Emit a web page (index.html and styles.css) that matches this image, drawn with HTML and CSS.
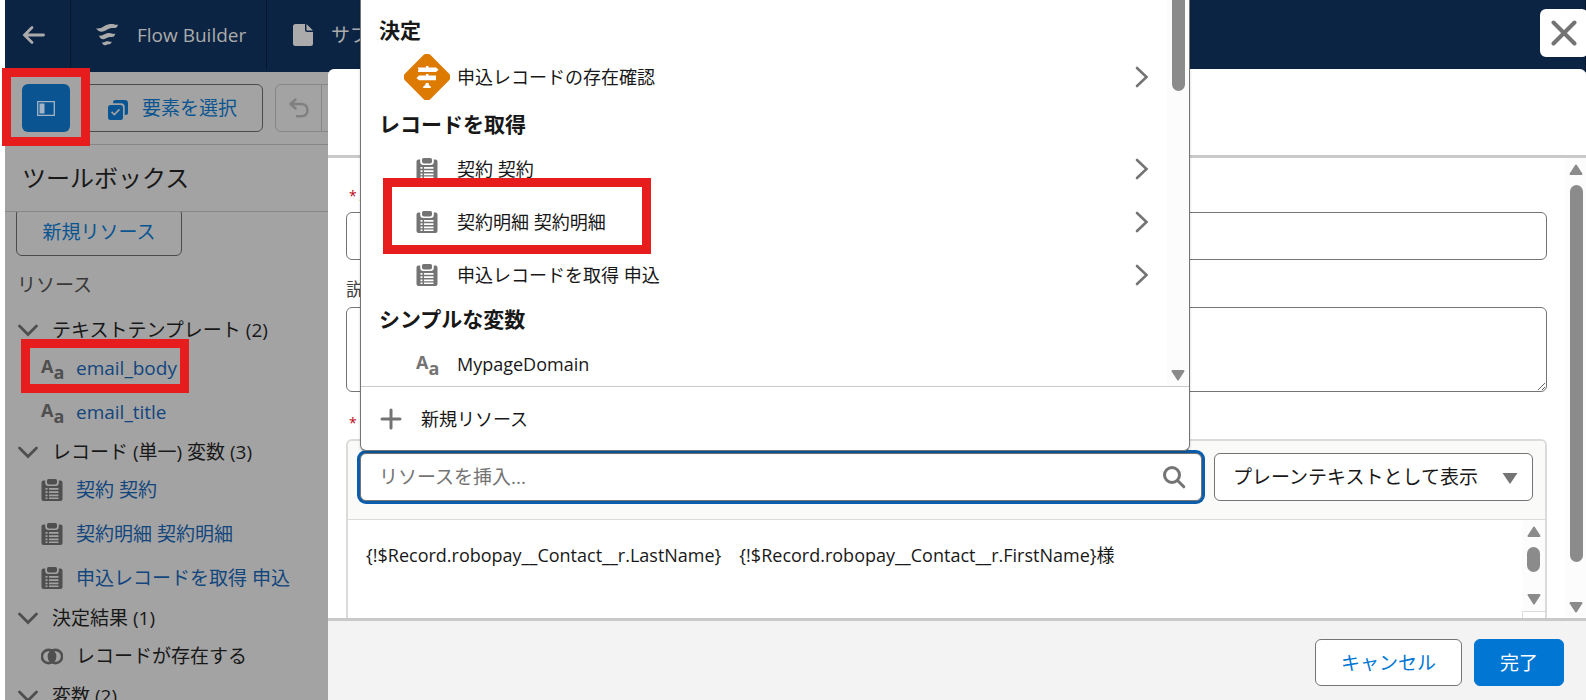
FILE: index.html
```html
<!DOCTYPE html>
<html lang="ja">
<head>
  <meta charset="UTF-8" />
  <title>Flow Builder</title>
  <meta name="viewport" content="width=device-width, initial-scale=1.0">
  <link rel="stylesheet" href="styles.css">
</head>
<body>
  <!-- shared icons -->
  <svg class="defs" aria-hidden="true">
    <symbol id="clipboard" viewBox="0 0 22 22">
      <path fill="currentColor" d="M7.500 0h7q1.500 0 1.500 1.500v2q0 2-2 2H8q-2 0-2-2v-2Q6 0 7.500 0z"/>
      <path fill="currentColor" fill-rule="evenodd" d="M2.500 1.500h1.700v2.200q0 3.300 3.300 3.300h7q3.300 0 3.300-3.300V1.500h1.700q2 0 2 2V20q0 2-2 2h-17q-2 0-2-2V3.500q0-2 2-2zM4.500 9v1.700h2V9zM8 9v1.700h9.500V9zM4.500 12.300V14h2v-1.700zM8 12.300V14h9.500v-1.700zM4.500 15.600v1.700h2v-1.700zM8 15.600v1.700h9.500v-1.700zM4.500 18.600V20h2v-1.400zM8 18.600V20h9.500v-1.400z"/>
    </symbol>
    <symbol id="right" viewBox="0 0 14 22">
      <path fill="none" stroke="currentColor" stroke-width="2.600" stroke-linecap="round" d="M2 2l9.500 9L2 20"/>
    </symbol>
    <symbol id="down" viewBox="0 0 22 14">
      <path fill="none" stroke="currentColor" stroke-width="2.800" stroke-linecap="round" d="M2.500 3L11 11.500 19.500 3"/>
    </symbol>
    <symbol id="tri-up" viewBox="0 0 14 12">
      <path fill="currentColor" stroke="currentColor" stroke-width="2" stroke-linejoin="round" d="M7 1.500L12.500 10h-11z"/>
    </symbol>
    <symbol id="tri-down" viewBox="0 0 14 12">
      <path fill="currentColor" stroke="currentColor" stroke-width="2" stroke-linejoin="round" d="M7 10.500L12.500 2h-11z"/>
    </symbol>
  </svg>

  <div class="app">
    <header class="topbar">
      <a class="back" href="#" aria-label="戻る">
        <svg width="24" height="20" viewBox="0 0 24 20" fill="none" stroke="currentColor" stroke-width="2.800" stroke-linecap="round"><path d="M3 10h18.500M10 2.500L2.500 10l7.500 7.500"/></svg>
      </a>
      <div class="brand">
        <svg width="22" height="22" viewBox="0 0 22 22" fill="currentColor"><path d="M0 4.200c3 .8 5-.2 8-2C12.500-.3 16-.5 18.500.4c1.200.5 2.500.4 3.500 0C21.500 3 20.200 4 18 4c-2.500-.2-4.500.2-7.500 2C6 8.600 2.500 8.200 0 4.200zM2.800 11.500c2 .6 3.600 0 5.700-1.200 3-1.600 5.500-1.600 7.300-.8 1.300.5 2.500.5 3.500 0-.5 2.500-1.800 3.700-4 3.500-2-.1-3.200.2-5.200 1.300-3.400 1.800-6 .6-7.300-2.800zM6 18.300c1.200.4 2.200 0 3.300-.6 1.500-.7 2.700-.6 3.700-.2.900.3 1.800.3 2.700 0-.4 2-1.400 2.900-3 2.700-1-.1-1.500.1-2.500.7-2 1-3.500.2-4.200-2.600z"/></svg>
        <span>Flow Builder</span>
      </div>
      <div class="flow-name">
        <svg width="20" height="22" viewBox="0 0 20 22" fill="currentColor"><path d="M2.500 0H12v6q0 2 2 2h6v11.500q0 2.500-2.500 2.500h-15Q0 22 0 19.500v-17Q0 0 2.500 0zM13.500 0L20 6.500h-6.500z"/></svg>
        <span>サブ</span>
      </div>
    </header>

    <div class="toolbar">
      <button class="toggle" aria-label="ツールボックスを切り替え">
        <svg width="18" height="15" viewBox="0 0 18 15"><path fill="none" stroke="currentColor" stroke-width="1.300" d="M.7.700h16.600v13.600H.7z"/><path fill="currentColor" d="M2.500 2.500h5v10h-5z"/></svg>
        <span class="mark mark-toggle"></span>
      </button>
      <button class="select-elements">
        <svg width="20" height="20" viewBox="0 0 20 20" fill="currentColor"><path fill-rule="evenodd" d="M2.500 5h10Q15 5 15 7.500v10q0 2.500-2.500 2.500h-10Q0 20 0 17.500v-10Q0 5 2.500 5zM3 12.500l3.300 3.300L12 10l-1.200-1.200-4.500 4.600-2.100-2.100z"/><path d="M5 3.300V2.500Q5 0 7.500 0h9.300Q20 0 20 3v9.500q0 2.500-2.500 2.500h-.8V7q0-3.700-3.700-3.700z"/></svg>
        要素を選択
      </button>
      <div class="history">
        <button aria-label="元に戻す">
          <svg width="20" height="20" viewBox="0 0 20 20" fill="none" stroke="currentColor" stroke-width="2.400" stroke-linecap="round" stroke-linejoin="round"><path d="M6.500 1.500L1.500 6l5 4.500M2 6h10.500q6 .5 6 6.300 0 6-6.500 6H8"/></svg>
        </button>
        <button aria-label="やり直し"></button>
      </div>
    </div>

    <aside class="toolbox">
      <h2>ツールボックス</h2>
      <div class="toolbox-body">
        <button class="new-resource">新規リソース</button>
        <h3>リソース</h3>
        <ul class="tree">
          <li class="group"><svg class="chev"><use href="#down"/></svg>テキストテンプレート (2)</li>
          <li class="leaf"><span class="aa">A<sub>a</sub></span><a href="#">email_body</a><span class="mark mark-leaf"></span></li>
          <li class="leaf"><span class="aa">A<sub>a</sub></span><a href="#">email_title</a></li>
          <li class="group"><svg class="chev"><use href="#down"/></svg>レコード (単一) 変数 (3)</li>
          <li class="leaf"><svg class="icon"><use href="#clipboard"/></svg><a href="#">契約 契約</a></li>
          <li class="leaf"><svg class="icon"><use href="#clipboard"/></svg><a href="#">契約明細 契約明細</a></li>
          <li class="leaf"><svg class="icon"><use href="#clipboard"/></svg><a href="#">申込レコードを取得 申込</a></li>
          <li class="group"><svg class="chev"><use href="#down"/></svg>決定結果 (1)</li>
          <li class="leaf"><svg class="icon" viewBox="0 0 22 22"><g fill="none" stroke="currentColor" stroke-width="2.600"><circle cx="7.500" cy="11.500" r="6.600"/><circle cx="14.500" cy="11.500" r="6.600"/></g><path fill="currentColor" d="M11 5.500q4.500 6 0 12-4.500-6 0-12z"/></svg>レコードが存在する</li>
          <li class="group"><svg class="chev"><use href="#down"/></svg>変数 (2)</li>
        </ul>
      </div>
    </aside>
  </div>

  <button class="close" aria-label="閉じる">
    <svg width="26" height="26" viewBox="0 0 26 26" fill="none" stroke="currentColor" stroke-width="4" stroke-linecap="round"><path d="M2.500 2.500l21 21M23.500 2.500l-21 21"/></svg>
  </button>

  <section class="modal" role="dialog">
    <div class="modal-header"></div>

    <div class="modal-body">
      <div class="form">
        <div class="field">
          <label for="apiName"><abbr>*</abbr>API 参照名</label>
          <input id="apiName" type="text">
        </div>
        <div class="field">
          <label for="description">説明</label>
          <textarea id="description"></textarea>
        </div>
        <div class="field">
          <label for="bodyText"><abbr>*</abbr>本文</label>
          <div class="editor">
            <div class="editor-bar">
              <div class="search">
                <input type="text" placeholder="リソースを挿入..." aria-label="リソースを挿入">
                <svg width="24" height="24" viewBox="0 0 24 24" fill="none" stroke="currentColor" stroke-width="3" stroke-linecap="round"><circle cx="10" cy="10" r="7.500"/><path d="M15.800 15.800l6 6"/></svg>
              </div>
              <div class="view-as">
                <select aria-label="表示形式"><option>プレーンテキストとして表示</option></select>
                <svg width="16" height="11" viewBox="0 0 16 11" fill="currentColor"><path d="M.5 0h15L8 11z"/></svg>
              </div>
            </div>
            <div class="editor-text">
              <textarea id="bodyText">{!$Record.robopay__Contact__r.LastName}　{!$Record.robopay__Contact__r.FirstName}様</textarea>
              <div class="side">
                <div class="scroll scroll-editor">
                  <svg><use href="#tri-up"/></svg>
                  <i></i>
                  <svg><use href="#tri-down"/></svg>
                </div>
              </div>
            </div>
          </div>
        </div>
      </div>
      <div class="scroll scroll-body">
        <svg><use href="#tri-up"/></svg>
        <i></i>
        <svg><use href="#tri-down"/></svg>
      </div>
    </div>

    <footer class="modal-footer">
      <button class="cancel">キャンセル</button>
      <button class="done">完了</button>
    </footer>

    <!-- resource picker -->
    <div class="menu">
      <div class="menu-list">
        <div class="menu-items">
          <h4>決定</h4>
          <ul>
            <li class="decision">
              <span class="pic"><svg width="46" height="46" viewBox="0 0 46 46"><rect x="5" y="5" width="36" height="36" rx="5" fill="#dd7a01" transform="rotate(45 23 23)"/><path fill="#fff" d="M14 13.500h8V12h2.500v1.500H32l2.500 2.300-2.500 2.200H14v-1.500l1-.7-1-.8zM15 21.500h7V20h2.500v1.500H32v4.700H15L12.500 24zM22 29h2.500l.5 2.200q2 .8 2 2.800h-8q0-2 2-2.800z"/></svg></span>
              申込レコードの存在確認<svg class="go"><use href="#right"/></svg>
            </li>
          </ul>
          <h4>レコードを取得</h4>
          <ul>
            <li><span class="pic"><svg class="icon"><use href="#clipboard"/></svg></span>契約 契約<svg class="go"><use href="#right"/></svg></li>
            <li><span class="pic"><svg class="icon"><use href="#clipboard"/></svg></span>契約明細 契約明細<svg class="go"><use href="#right"/></svg><span class="mark mark-item"></span></li>
            <li><span class="pic"><svg class="icon"><use href="#clipboard"/></svg></span>申込レコードを取得 申込<svg class="go"><use href="#right"/></svg></li>
          </ul>
          <h4>シンプルな変数</h4>
          <ul>
            <li><span class="pic"><span class="aa">A<sub>a</sub></span></span>MypageDomain</li>
          </ul>
        </div>
        <div class="scroll scroll-menu">
          <i></i>
          <svg><use href="#tri-down"/></svg>
        </div>
      </div>
      <button class="menu-new">
        <svg width="22" height="22" viewBox="0 0 22 22" stroke="currentColor" stroke-width="3" stroke-linecap="round"><path d="M11 2v18M2 11h18"/></svg>
        新規リソース
      </button>
    </div>
  </section>
</body>
</html>
```
FILE: styles.css
```css
* {
  box-sizing: border-box;
}

body {
  margin: 0;
  height: 100vh;
  overflow: hidden;
  position: relative;
  background: #fff;
  color: #181818;
  font-family: "Open Sans", "Noto Sans CJK JP", sans-serif;
  font-size: 19px;
  line-height: 24px;
}

button, input, select, textarea {
  font: inherit;
  color: inherit;
}

button {
  padding: 0;
  border: 1px solid #747474;
  border-radius: 6px;
  background: none;
}

a {
  color: inherit;
  text-decoration: none;
}

h2, h3, h4, ul {
  margin: 0;
  padding: 0;
  font-weight: normal;
  list-style: none;
}

.defs {
  position: absolute;
  width: 0;
  height: 0;
}

.icon {
  width: 22px;
  height: 22px;
}

/* red highlight frames */
.mark {
  position: absolute;
  border: 9px solid #e71d1d;
  z-index: 2;
}

/* dimmed page behind the modal */
.app {
  height: 100%;
  margin-left: 5px;
  display: flex;
  flex-direction: column;
  background: #a3a3a3;
}

.topbar {
  flex: none;
  display: flex;
  height: 72px;
  padding-bottom: 2px;
  background: #0c2443;
  color: #ababab;
}

.topbar > * {
  display: flex;
  align-items: center;
  border-right: 1px solid #06162b;
}

.back {
  width: 66px;
  padding-left: 17px;
}

.brand {
  width: 196px;
  padding-left: 25px;
  gap: 19px;
}

.flow-name {
  flex: 1;
  padding-left: 26px;
  gap: 18px;
}

.toolbar {
  flex: none;
  display: flex;
  gap: 12px;
  height: 73px;
  padding: 12px 17px;
  border-bottom: 1px solid #868686;
}

.toolbar button {
  height: 48px;
}

.toolbar .toggle {
  position: relative;
  width: 48px;
  border: none;
  background: #0a5591;
  color: #a3b4c4;
}

.toggle svg {
  display: block;
  margin: auto;
}

.mark-toggle {
  left: -20px;
  top: -16px;
  width: 88px;
  height: 78px;
}

.select-elements {
  width: 181px;
  display: flex;
  align-items: center;
  justify-content: flex-end;
  gap: 14px;
  padding-right: 25px;
  border-color: #4b4b4b;
  color: #0a5591;
}

.select-elements svg {
  margin-top: 4px;
}

.history {
  display: flex;
}

.history button {
  width: 47px;
  border-color: #868686;
  border-radius: 6px 0 0 6px;
  color: #808080;
}

.history button + button {
  border-left: none;
  border-radius: 0 6px 6px 0;
}

.history svg {
  display: block;
  margin: auto;
}

.toolbox {
  flex: 1;
  min-height: 0;
  width: 323px;
  display: flex;
  flex-direction: column;
}

.toolbox h2 {
  flex: none;
  height: 67px;
  padding: 0 17px;
  border-bottom: 1px solid #868686;
  font-size: 24px;
  line-height: 66px;
}

.toolbox-body {
  flex: 1;
  overflow: hidden;
  padding: 0 12px;
}

.new-resource {
  display: block;
  width: 166px;
  height: 48px;
  margin: -4px 0 0 -1px;
  border-color: #4b4b4b;
  color: #0a5591;
}

.toolbox h3 {
  margin: 17px 0 16px;
  font-size: 19px;
  color: #383838;
}

.group {
  display: flex;
  align-items: center;
  gap: 13px;
  height: 34px;
}

.chev {
  width: 22px;
  height: 14px;
  color: #4f4f4f;
}

.leaf {
  position: relative;
  display: flex;
  align-items: center;
  gap: 13px;
  height: 44px;
  padding: 0 0 2px 24px;
}

.leaf svg, .leaf .aa {
  color: #4f4f4f;
}

.leaf a {
  color: #12467d;
}

.mark-leaf {
  left: 4px;
  top: -8px;
  width: 168px;
  height: 54px;
}

.aa {
  width: 22px;
  height: 22px;
  display: flex;
  font-size: 18px;
  font-weight: bold;
  line-height: 18px;
  color: #747474;
}

.aa sub {
  font-size: 18px;
  line-height: 30px;
  vertical-align: baseline;
}

/* modal */
.close {
  position: absolute;
  top: 9px;
  right: -2px;
  width: 48px;
  height: 48px;
  border: none;
  background: #fff;
  color: #747474;
}

.close svg {
  display: block;
  margin: auto;
}

.modal {
  position: absolute;
  top: 69px;
  right: 0;
  bottom: 0;
  left: 328px;
  display: flex;
  flex-direction: column;
  background: #fff;
  border-radius: 6px 6px 0 0;
}

.modal-header {
  flex: none;
  height: 89px;
  border-bottom: 3px solid #c9c9c9;
}

.modal-body {
  flex: 1;
  min-height: 0;
  display: flex;
  overflow: hidden;
}

.form {
  flex: 1;
  padding: 26px 19px 0 18px;
}

.field {
  margin-bottom: 19px;
}

.field label {
  display: block;
  height: 24px;
  margin-bottom: 4px;
  font-size: 18px;
  line-height: 20px;
  color: #444;
}

.field abbr {
  margin: 0 3px;
  font-size: 14px;
  color: #ba0517;
}

.field > input, .field > textarea {
  display: block;
  width: 100%;
  height: 48px;
  border: 1px solid #747474;
  border-radius: 6px;
  background: #fff;
}

.field > textarea {
  height: 85px;
}

.editor {
  border: 2px solid #dddbda;
  border-radius: 6px;
}

.editor-bar {
  display: flex;
  gap: 12px;
  padding: 12px 12px 18px;
  background: #fafaf9;
  border-bottom: 1px solid #dddbda;
  border-radius: 6px 6px 0 0;
}

.search {
  flex: 1;
  display: flex;
  align-items: center;
  height: 48px;
  padding: 0 15px 0 18px;
  border: 1px solid #747474;
  border-radius: 6px;
  box-shadow: 0 0 0 3px #0b5cab;
  background: #fff;
  color: #747474;
}

.search input {
  flex: 1;
  padding: 0;
  border: none;
  outline: none;
  background: none;
}

.search input::placeholder {
  color: #747474;
}

.view-as {
  position: relative;
}

.view-as select {
  appearance: none;
  width: 319px;
  height: 48px;
  padding: 0 40px 0 18px;
  border: 1px solid #747474;
  border-radius: 6px;
  background: #fff;
}

.view-as svg {
  position: absolute;
  right: 15px;
  top: 20px;
  color: #747474;
}

.editor-text {
  display: flex;
  height: 140px;
}

.editor-text textarea {
  flex: 1;
  padding: 23px 18px;
  border: none;
  outline: none;
  resize: none;
  overflow: hidden;
  background: none;
  font-size: 18px;
}

.side {
  width: 23px;
}

/* scrollbars */
.scroll {
  flex: none;
  display: flex;
  flex-direction: column;
  align-items: center;
  background: #fcfcfc;
  color: #8b8b8b;
}

.scroll svg {
  width: 14px;
  height: 12px;
}

.scroll i {
  width: 13px;
  border-radius: 7px;
  background: #8b8b8b;
}

.scroll-body {
  width: 20px;
  padding: 6px 0 5px;
}

.scroll-body i {
  flex: 1;
  margin: 9px 0 39px;
}

.scroll-editor {
  height: 92px;
  padding: 6px 0;
  border-bottom: 1px solid #dddbda;
  justify-content: space-between;
}

.side::after {
  content: "";
  display: block;
  height: 48px;
  border-left: 1px solid #dddbda;
}

.scroll-editor i {
  height: 25px;
  margin-bottom: 12px;
}

.modal-footer {
  flex: none;
  display: flex;
  justify-content: flex-end;
  gap: 12px;
  padding: 18px 22px 14px;
  border-top: 3px solid #c9c9c9;
  background: #f3f3f3;
}

.modal-footer button {
  height: 47px;
  padding: 0 25px;
}

.modal-footer .cancel {
  background: #fff;
  color: #0176d3;
}

.modal-footer .done {
  border-color: #0176d3;
  background: #0176d3;
  color: #fff;
}

/* resource picker */
.menu {
  position: absolute;
  top: -69px;
  left: 32px;
  right: 396px;
  border: 1px solid #747474;
  border-top: none;
  border-radius: 0 0 6px 6px;
  box-shadow: 0 2px 3px rgba(0, 0, 0, 0.16);
  background: #fff;
}

.menu-list {
  display: flex;
  height: 387px;
  overflow: hidden;
  border-bottom: 1px solid #c9c9c9;
}

.menu-items {
  flex: 1;
  padding-top: 12px;
}

.menu h4 {
  padding-left: 18px;
  font-size: 21px;
  font-weight: bold;
  line-height: 36px;
}

.menu li {
  position: relative;
  display: flex;
  align-items: center;
  height: 53px;
  padding: 0 18px 0 43px;
  font-size: 18px;
}

.menu li.decision {
  height: 58px;
}

.pic {
  width: 46px;
  margin-right: 7px;
  display: flex;
  justify-content: center;
  color: #747474;
}

.go {
  width: 14px;
  height: 22px;
  margin-left: auto;
  color: #747474;
}

.mark-item {
  left: 22px;
  top: -17px;
  width: 268px;
  height: 76px;
}

.scroll-menu {
  width: 22px;
  justify-content: space-between;
  padding-bottom: 5px;
}

.scroll-menu i {
  height: 91px;
  border-radius: 0 0 7px 7px;
}

.menu-new {
  display: flex;
  align-items: center;
  gap: 19px;
  width: 100%;
  height: 63px;
  padding-left: 19px;
  border: none;
  font-size: 18px;
}

.menu-new svg {
  color: #747474;
}
```
